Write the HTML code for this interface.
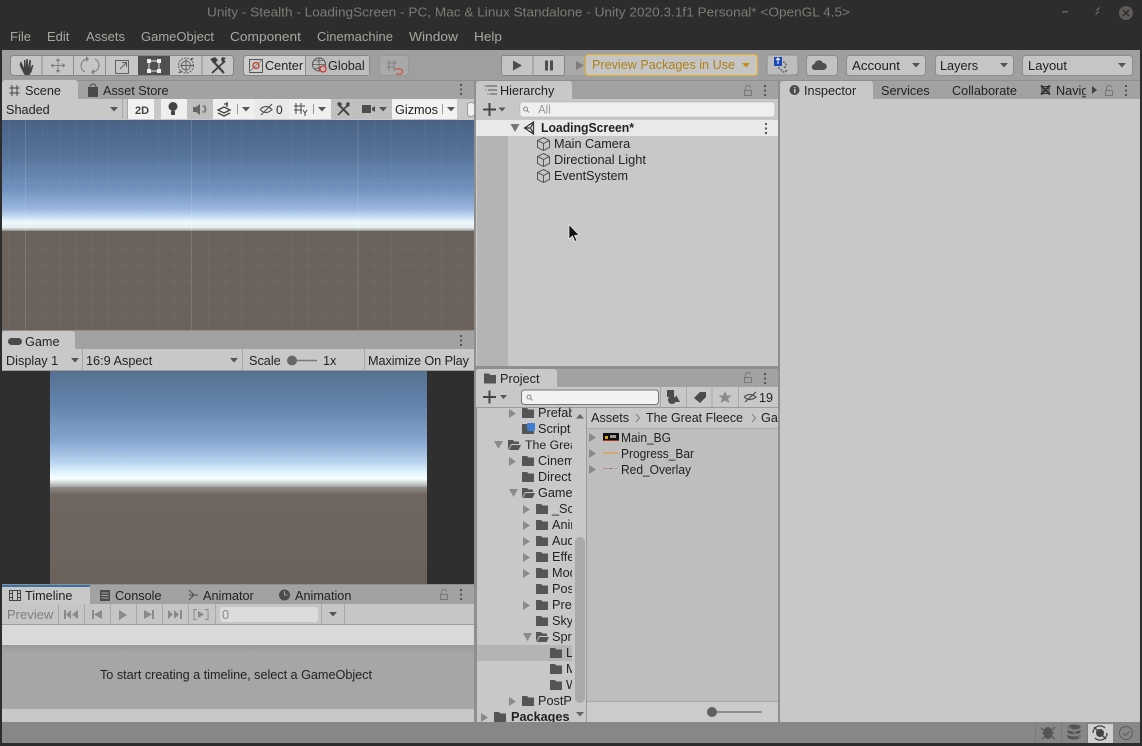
<!DOCTYPE html>
<html><head><meta charset="utf-8"><style>
html,body{margin:0;padding:0;background:#2d2d2d;width:1142px;height:746px;overflow:hidden}
svg{display:block;filter:blur(.35px)}
text{font-family:"Liberation Sans",sans-serif;font-size:12.7px;fill:#222}
.m{fill:#aaa6a0;font-size:13px}
.b{font-weight:bold}
</style></head><body>
<svg width="1142" height="746" viewBox="0 0 1142 746" xmlns="http://www.w3.org/2000/svg">
<defs>
<linearGradient id="sky1" x1="0" y1="0" x2="0" y2="1">
<stop offset="0" stop-color="#4a6286"/><stop offset=".3" stop-color="#557298"/><stop offset=".62" stop-color="#7192bc"/><stop offset=".8" stop-color="#9ab6de"/><stop offset=".87" stop-color="#c4dcf2"/><stop offset=".92" stop-color="#eef9fd"/><stop offset=".97" stop-color="#e4eeee"/><stop offset="1" stop-color="#8e9090"/>
</linearGradient>
<linearGradient id="sky2" x1="0" y1="0" x2="0" y2="1">
<stop offset="0" stop-color="#56708f"/><stop offset=".3" stop-color="#6484ad"/><stop offset=".6" stop-color="#85a5cf"/><stop offset=".78" stop-color="#b7d2ee"/><stop offset=".87" stop-color="#e0f2fc"/><stop offset=".93" stop-color="#f6fefe"/><stop offset="1" stop-color="#a3a5a3"/>
</linearGradient>
<linearGradient id="gr2" x1="0" y1="0" x2="0" y2="1"><stop offset="0" stop-color="#8f8d88"/><stop offset=".08" stop-color="#6f6660"/><stop offset="1" stop-color="#6b625c"/></linearGradient>
<linearGradient id="sh" x1="0" y1="0" x2="0" y2="1"><stop offset="0" stop-color="#989898"/><stop offset="1" stop-color="#a6a6a6"/></linearGradient>
<g id="fc"><path d="M0 0h5l1.500 1.500H12V10H0z" fill="#555"/></g>
<g id="fo"><path d="M0 10V0h5l1.500 1.500H11V4H3L0 10zM3.500 5H13l-2.500 5H1z" fill="#555"/></g>
<g id="cube" fill="none" stroke="#555" stroke-width="1"><path d="M6.500 .5l6 3v7l-6 3-6-3v-7zM.5 3.500l6 3 6-3M6.500 6.500v7"/></g>
<g id="tr"><path d="M0 0l7 4.500-7 4.500z" fill="#8a8a8a"/></g>
<g id="td"><path d="M0 0h9l-4.500 8z" fill="#8a8a8a"/></g>
<g id="dd"><path d="M0 0h8l-4 4.500z" fill="#555"/></g>
<g id="dots" fill="#555"><rect x="0" y="0" width="2" height="2"/><rect x="0" y="4.500" width="2" height="2"/><rect x="0" y="9" width="2" height="2"/></g>
<g id="lock" fill="none" stroke="#777" stroke-width="1"><path d="M1.500 5.500h7v5h-7zM2.500 5.500V2.500a2.500 2 0 0 1 5 0"/></g>
</defs>

<!-- window chrome -->
<rect width="1142" height="746" fill="#2d2d2d"/>
<text x="207" y="16.500" style="font-size:13px;fill:#7d7974" textLength="643" lengthAdjust="spacingAndGlyphs">Unity - Stealth - LoadingScreen - PC, Mac &amp; Linux Standalone - Unity 2020.3.1f1 Personal* &lt;OpenGL 4.5&gt;</text>
<rect x="1062" y="11" width="6" height="1.500" fill="#66625e"/>
<path d="M1096 10l3-3 1 1-3 3zM1095 14l3-3 1 1-3 3z" fill="#66625e"/>
<circle cx="1126" cy="13" r="7" fill="#5e5b58"/><path d="M1123 10l6 6M1129 10l-6 6" stroke="#2d2d2d" stroke-width="1.500"/>
<text class="m" x="10" y="41">File</text><text class="m" x="47" y="41">Edit</text><text class="m" x="86" y="41">Assets</text><text class="m" x="141" y="41" textLength="73" lengthAdjust="spacingAndGlyphs">GameObject</text><text class="m" x="230" y="41" textLength="71" lengthAdjust="spacingAndGlyphs">Component</text><text class="m" x="317" y="41" textLength="76" lengthAdjust="spacingAndGlyphs">Cinemachine</text><text class="m" x="409" y="41" textLength="49" lengthAdjust="spacingAndGlyphs">Window</text><text class="m" x="474" y="41" textLength="28" lengthAdjust="spacingAndGlyphs">Help</text>

<!-- toolbar -->
<rect x="2" y="50" width="1138" height="30" fill="#9f9f9f"/>
<rect x="10.500" y="55.500" width="223" height="20" rx="3" fill="#c6c6c6" stroke="#858585"/>
<rect x="138" y="56" width="32" height="19" fill="#505050"/>
<path d="M42 56v19M73.500 56v19M105.500 56v19M202 56v19" stroke="#8c8c8c"/>
<!-- hand -->
<path d="M21 61l3 7v-8h1.500v7l1-8h1.500v8l1.500-7h1.500l-.5 8 1.500-3h1.500l-2 7-2 3h-5l-3-6-2-4z" fill="#444"/>
<!-- move -->
<g stroke="#808080" fill="none"><path d="M58 60v11M52 65.500h12"/></g><path d="M58 58l2.500 3h-5zM58 73l2.500-3h-5zM50.500 65.500l3-2.500v5zM65.500 65.500l-3-2.500v5z" fill="#808080"/>
<!-- rotate -->
<path d="M85 72a7 7 0 0 1 1-13M95 59a7 7 0 0 1-1 13" fill="none" stroke="#808080" stroke-width="1.200"/><path d="M86 56l3 3-3 3zM94 75l-3-3 3-3z" fill="#808080"/>
<!-- scale -->
<rect x="115.500" y="60.500" width="13" height="13" fill="none" stroke="#606060"/><path d="M120 69l6-6M122 62.500h4.500V67" fill="none" stroke="#606060"/>
<!-- rect -->
<g fill="#f0f0f0"><rect x="147" y="59" width="4" height="4"/><rect x="157" y="59" width="4" height="4"/><rect x="147" y="69" width="4" height="4"/><rect x="157" y="69" width="4" height="4"/></g><rect x="149" y="61" width="10" height="10" fill="none" stroke="#e8e8e8"/>
<!-- transform -->
<circle cx="186" cy="65.500" r="7.500" fill="none" stroke="#606060" stroke-dasharray="2 1"/><circle cx="186" cy="65.500" r="4.500" fill="none" stroke="#606060"/><path d="M186 59v13M180 65.500h13" stroke="#606060"/><path d="M178 73l3-3v3zM194 58l-3 3v-3z" fill="#606060"/>
<!-- tools -->
<path d="M212 60l12 13" stroke="#3f3f3f" stroke-width="2.200" fill="none"/><path d="M225 61l-13 12" stroke="#3f3f3f" stroke-width="1.800" fill="none"/><path d="M210 59l5-2 3 3-3 3zM222 57l4 1-2 2 2 2-3 1-2-3z" fill="#3f3f3f"/>

<rect x="243.500" y="55.500" width="126" height="20" rx="3" fill="#cdcdcd" stroke="#858585"/>
<rect x="306" y="56" width="63" height="19" fill="#bdbdbd"/><path d="M305.500 56v19" stroke="#8c8c8c"/>
<rect x="249.500" y="59.500" width="13" height="13" fill="none" stroke="#555"/><path d="M249 72l14-13" stroke="#888"/><circle cx="256" cy="65.500" r="3" fill="none" stroke="#c83a2e" stroke-width="1.300"/>
<text x="265" y="70">Center</text>
<circle cx="319" cy="64.500" r="6.500" fill="none" stroke="#555"/><path d="M313 64.500h13M319 58v13M315 60.500a10 5 0 0 0 8 0M315 68.500a10 5 0 0 1 8 0" fill="none" stroke="#555" stroke-width=".8"/><circle cx="323" cy="69" r="3" fill="#bdbdbd" stroke="#d0362c" stroke-width="1.300"/>
<text x="328" y="70">Global</text>
<rect x="379.500" y="55.500" width="29" height="20" rx="3" fill="#a9a9a9" stroke="#979797"/>
<path d="M389 60v11M394 60v11M387 63h10M387 67h8" stroke="#808080"/><path d="M395 69h5v-0a2.500 2.500 0 0 1 0 5h-4" fill="none" stroke="#c8564b" stroke-width="1.300"/>

<!-- play -->
<rect x="501.500" y="55.500" width="63" height="20" rx="2" fill="#c4c4c4" stroke="#858585"/><path d="M533 56v19" stroke="#8c8c8c"/>
<path d="M513 60.500l9 5-9 5z" fill="#4c4c4c"/><rect x="545" y="60.500" width="3" height="10" fill="#4c4c4c"/><rect x="550" y="60.500" width="3" height="10" fill="#4c4c4c"/>
<rect x="565" y="56" width="21" height="19" fill="#a9a9a9"/><path d="M576 61l8 4.500-8 4.500z" fill="#7c7c7c"/>
<rect x="585.500" y="54.500" width="172" height="21" rx="3" fill="#c5c5c5" stroke="#e8b022"/>
<text x="592" y="69" style="font-size:12.500px;fill:#ad8119" textLength="143" lengthAdjust="spacingAndGlyphs">Preview Packages in Use</text>
<path d="M742 63h8l-4 4.500z" fill="#c28f14"/>
<rect x="767" y="55" width="31" height="20" rx="3" fill="#bdbdbd" stroke="#8e8e8e"/>
<rect x="774" y="57" width="8" height="9" fill="#1c48b8"/><path d="M778 58v6M776 60l2-2 2 2" stroke="#fff" fill="none"/>
<path d="M783 62a3 3 0 0 1 0 6M781 69a3 3 0 0 0 6 0M778 68h2" stroke="#555" stroke-width="1.300" fill="none" stroke-dasharray="2 1"/>
<rect x="806.500" y="55.500" width="31" height="20" rx="3" fill="#c2c2c2" stroke="#8e8e8e"/>
<path d="M815 70a3 3 0 0 1-.5-6 4.500 4.500 0 0 1 8.500-1 3.500 3.500 0 0 1 .5 7z" fill="#4f4f4f"/>
<rect x="846.500" y="55.500" width="79" height="20" rx="3" fill="#c5c5c5" stroke="#8e8e8e"/><text x="852" y="70" textLength="48" lengthAdjust="spacingAndGlyphs">Account</text><use href="#dd" x="912" y="63"/>
<rect x="935.500" y="55.500" width="78" height="20" rx="3" fill="#c5c5c5" stroke="#8e8e8e"/><text x="940" y="70">Layers</text><use href="#dd" x="1000" y="63"/>
<rect x="1022.500" y="55.500" width="110" height="20" rx="3" fill="#c5c5c5" stroke="#8e8e8e"/><text x="1028" y="70" textLength="39" lengthAdjust="spacingAndGlyphs">Layout</text><use href="#dd" x="1118" y="63"/>

<!-- separators / panel bg -->
<rect x="2" y="80" width="1138" height="642" fill="#8f8f8f"/>

<!-- SCENE -->
<rect x="2" y="81" width="472" height="18" fill="#a2a2a2"/>
<path d="M2 83a3 3 0 0 1 3-3h70a3 3 0 0 1 3 3v16H2z" fill="#c8c8c8"/>
<path d="M12 85v11M17 85v11M9.500 88h10M9.500 93h10" stroke="#444" stroke-width="1"/>
<text x="25" y="95">Scene</text>
<path d="M88 87h10v9a1 1 0 0 1-1 1h-8a1 1 0 0 1-1-1z" fill="#4a4a4a"/><path d="M90 87a3 3 0 0 1 6 0" fill="none" stroke="#4a4a4a"/>
<text x="103" y="95">Asset Store</text>
<use href="#dots" x="460" y="84"/>
<rect x="2" y="99" width="472" height="21" fill="#c8c8c8"/>
<text x="6" y="114">Shaded</text><use href="#dd" x="110" y="107"/>
<path d="M122.500 99v20M127.500 99v20" stroke="#a8a8a8"/>
<rect x="128" y="99" width="26" height="20" fill="#f2f2f2"/><text x="135" y="114" style="font-size:11px;fill:#444;font-weight:bold">2D</text>
<rect x="161" y="99" width="26" height="20" fill="#efefef"/><circle cx="173" cy="106.500" r="4.500" fill="#444"/><rect x="171" y="111" width="4" height="4" fill="#444"/>
<rect x="187" y="99" width="26" height="20" fill="#c0c0c0"/><path d="M193 107h3l4-3v11l-4-3h-3z" fill="#666"/><path d="M202 106a3 3 0 0 1 0 6M204 105a5 5 0 0 1 0 8" stroke="#777" fill="none"/>
<rect x="213" y="99" width="42" height="20" fill="#efefef"/>
<path d="M218 110l6-3 6 3-6 3zM218 113l6 3 6-3M224 104h4M227 102v5" fill="none" stroke="#444" stroke-width="1.300"/><path d="M237.500 104v10" stroke="#999"/><use href="#dd" x="242" y="107"/>
<rect x="255" y="99" width="34" height="20" fill="#e8e8e8"/>
<path d="M260 109.500q6-6 12 0q-6 6-12 0M261 115l11-11" fill="none" stroke="#555" stroke-width="1.200"/><text x="276" y="114" style="font-size:12px">0</text>
<rect x="289" y="99" width="42" height="20" fill="#efefef"/>
<path d="M296 103v11M301 103v11M294 106h11M294 110h8" stroke="#444"/><path d="M303 110l2 3 2-3M305 113v3" stroke="#444" fill="none"/><path d="M313.500 104v10" stroke="#999"/><use href="#dd" x="318" y="107"/>
<rect x="331" y="99" width="26" height="20" fill="#c0c0c0"/>
<path d="M338 104l11 11" stroke="#444" stroke-width="2"/><path d="M349 104l-11 11" stroke="#444" stroke-width="1.600"/><path d="M337 103l3-1 2 2-2 3zM347 102l3 1-1 2 1 1-3 1-1-2z" fill="#444"/>
<rect x="357" y="99" width="35" height="20" fill="#c0c0c0"/><rect x="362" y="105" width="9" height="8" fill="#4d4d4d"/><path d="M372 108l3-2v6l-3-2z" fill="#4d4d4d"/><use href="#dd" x="379" y="107"/>
<rect x="392" y="99" width="65" height="20" fill="#f2f2f2"/><text x="395" y="114">Gizmos</text><path d="M442.500 104v10" stroke="#999"/><use href="#dd" x="447" y="107"/>
<rect x="457" y="99" width="17" height="20" fill="#c8c8c8"/>
<rect x="467.500" y="102.500" width="7" height="14" rx="3" fill="#f0f0f0" stroke="#999"/>

<rect x="2" y="120" width="472" height="111" fill="url(#sky1)"/>
<rect x="2" y="231" width="472" height="99" fill="#6b625c"/>
<g stroke="#ffffff" stroke-opacity=".035"><path d="M8.500 120v210M42.500 120v210M59.500 120v210M75.500 120v210M92 120v210M108.500 120v210M125.500 120v210M141.500 120v210M158.500 120v210M175 120v210M208.500 120v210M225 120v210M241.500 120v210M258 120v210M275 120v210M291.500 120v210M308 120v210M325 120v210M341.500 120v210M375 120v210M391.500 120v210M408 120v210M425 120v210M441.500 120v210M458 120v210"/><path d="M2 133.500h472M2 150h472M2 167h472M2 183.500h472M2 200h472M2 249h472M2 265h472M2 281.500h472M2 298h472M2 315h472"/></g>
<g stroke="#ffffff" stroke-opacity=".13"><path d="M25.500 120v210M191.500 120v210M358 120v210"/></g>

<!-- GAME -->
<rect x="2" y="331" width="472" height="18" fill="#a2a2a2"/>
<path d="M2 334a3 3 0 0 1 3-3h67a3 3 0 0 1 3 3v15H2z" fill="#c8c8c8"/>
<rect x="8" y="338" width="14" height="7" rx="3.500" fill="#4a4a4a"/>
<text x="25" y="346">Game</text><use href="#dots" x="460" y="335"/>
<rect x="2" y="349" width="472" height="21" fill="#c8c8c8"/>
<text x="6" y="365">Display 1</text><use href="#dd" x="71" y="358"/>
<path d="M82.500 349v21M242.500 349v21M364.500 349v21" stroke="#a8a8a8"/>
<text x="86" y="365">16:9 Aspect</text><use href="#dd" x="230" y="358"/>
<text x="249" y="365">Scale</text><path d="M292 360.500h25" stroke="#777" stroke-width="1.500"/><circle cx="292" cy="360.500" r="5" fill="#666"/><text x="323" y="365">1x</text>
<text x="368" y="365" textLength="101" lengthAdjust="spacing">Maximize On Play</text>
<rect x="2" y="370" width="472" height="1" fill="#9b9b9b"/>
<rect x="2" y="371" width="48" height="213" fill="#2f2f2f"/><rect x="427" y="371" width="47" height="213" fill="#2f2f2f"/>
<rect x="50" y="371" width="377" height="116" fill="url(#sky2)"/>
<rect x="50" y="487" width="377" height="97" fill="url(#gr2)"/>

<!-- TIMELINE -->
<rect x="2" y="585" width="472" height="19" fill="#a2a2a2"/>
<rect x="2" y="585" width="88" height="19" fill="#c8c8c8"/><rect x="2" y="585" width="88" height="2" fill="#3a72b0"/>
<path d="M9.500 590.500h11v10h-11zM12.500 590.500v10M17.500 590.500v10M9.500 593.500h3M9.500 597.500h3M17.500 593.500h3M17.500 597.500h3" fill="none" stroke="#444"/>
<text x="25" y="600">Timeline</text>
<rect x="100" y="590" width="10" height="11" fill="#4c4c4c"/><path d="M101.500 593h7M101.500 595.500h7M101.500 598h7" stroke="#a2a2a2"/>
<text x="115" y="600">Console</text>
<path d="M189 590l5 5-5 5M189 595h9" fill="none" stroke="#4c4c4c"/>
<text x="203" y="600">Animator</text>
<circle cx="284.500" cy="595" r="5.500" fill="#4c4c4c"/><path d="M284.500 591v4h3" stroke="#a2a2a2" fill="none"/>
<text x="295" y="600">Animation</text>
<use href="#lock" x="439" y="589"/><use href="#dots" x="460" y="589"/>
<rect x="2" y="604" width="472" height="21" fill="#c6c6c6"/>
<rect x="2" y="624" width="472" height="1" fill="#9b9b9b"/>
<text x="7" y="619" style="fill:#7f7f7f;font-size:13px">Preview</text>
<path d="M58.500 604v20M84.500 604v20M110.500 604v20M136.500 604v20M162.500 604v20M188.500 604v20M215.500 604v20M321.500 604v20M344.500 604v20" stroke="#a8a8a8"/>
<g fill="#8a8a8a"><path d="M64 610h2v9h-2zM71 610v9l-5-4.500zM78 610v9l-6-4.500z"/><path d="M92 610h2v9h-2zM102 610v9l-8-4.500z"/><path d="M119 610l8 5-8 5z"/><path d="M144 610l8 4.500-8 4.500zM152 610h2v9h-2z"/><path d="M168 610l5 4.500-5 4.500zM174 610l5 4.500-5 4.500zM180 610h2v9h-2z"/><path d="M198 611l6 3.500-6 3.500z"/></g>
<path d="M197 609.500h-3v10h3M205 609.500h3v10h-3" fill="none" stroke="#8a8a8a"/>
<rect x="220" y="607" width="98" height="15" rx="3" fill="#dcdcdc"/><text x="222" y="619" style="fill:#8a8a8a">0</text>
<use href="#dd" x="329" y="612"/>
<rect x="2" y="625" width="472" height="20" fill="#d9d9d9"/>
<rect x="2" y="645" width="472" height="8" fill="url(#sh)"/>
<rect x="2" y="653" width="472" height="56" fill="#a6a6a6"/>
<text x="100" y="679" textLength="272" lengthAdjust="spacing">To start creating a timeline, select a GameObject</text>
<rect x="2" y="709" width="472" height="13" fill="#c8c8c8"/>

<!-- HIERARCHY -->
<rect x="476" y="81" width="302" height="18" fill="#a2a2a2"/>
<path d="M476 84a3 3 0 0 1 3-3h90a3 3 0 0 1 3 3v15h-96z" fill="#c8c8c8"/>
<path d="M486 86h11M488 90h9M490 94h7" stroke="#555"/><path d="M484.500 86h1M485.500 90h1M487.500 94h1" stroke="#555"/>
<text x="500" y="95">Hierarchy</text>
<use href="#lock" x="743" y="85"/><use href="#dots" x="764" y="85"/>
<rect x="476" y="99" width="302" height="21" fill="#c8c8c8"/>
<path d="M483 109.500h13M489.500 103v13" stroke="#444" stroke-width="2"/><path d="M498.500 107.500h7l-3.500 4z" fill="#555"/>
<rect x="520" y="102" width="255" height="15" rx="3" fill="#efefef" stroke="#aaa" stroke-width=".5"/>
<circle cx="525.500" cy="109" r="2" fill="none" stroke="#888"/><path d="M527 110.500l2 2" stroke="#888"/>
<text x="538" y="113.500" style="fill:#999;font-size:11.500px">All</text>
<rect x="476" y="120" width="302" height="246" fill="#c8c8c8"/>
<rect x="477" y="136" width="31" height="230" fill="#b4b4b4"/>
<rect x="476" y="120" width="302" height="16" fill="#e9e9e9"/>
<path d="M510.500 124h9l-4.500 8z" fill="#777"/>
<path d="M524.500 128l9-6v12zM524.500 128h6l3-6M530.500 128l3 6" fill="none" stroke="#333" stroke-width="1.200"/>
<text x="541" y="132" class="b" textLength="93" lengthAdjust="spacingAndGlyphs">LoadingScreen*</text>
<use href="#dots" x="765" y="123"/>
<use href="#cube" x="537" y="137"/><text x="554" y="148">Main Camera</text>
<use href="#cube" x="537" y="153"/><text x="554" y="164" textLength="92" lengthAdjust="spacingAndGlyphs">Directional Light</text>
<use href="#cube" x="537" y="169"/><text x="554" y="180" textLength="74" lengthAdjust="spacingAndGlyphs">EventSystem</text>
<!-- cursor -->
<path d="M569 224.500v14.500l3.500-3 2.500 5.500 2-1-2.500-5 4.500-.5z" fill="#111" stroke="#eee" stroke-width=".7"/>

<!-- INSPECTOR -->
<rect x="780" y="81" width="360" height="18" fill="#a2a2a2"/>
<path d="M780 84a3 3 0 0 1 3-3h87a3 3 0 0 1 3 3v15h-93z" fill="#c8c8c8"/>
<circle cx="794.500" cy="90" r="5" fill="#4a4a4a"/><rect x="794" y="89" width="1.500" height="4" fill="#c8c8c8"/><rect x="794" y="87" width="1.500" height="1.200" fill="#c8c8c8"/>
<text x="804" y="95">Inspector</text><text x="881" y="95">Services</text><text x="952" y="95">Collaborate</text>
<path d="M1041 85.500l9 9M1050 85.500l-9 9" stroke="#333" stroke-width="2"/><rect x="1042" y="86.500" width="7" height="7" fill="none" stroke="#333"/>
<text x="1056" y="95">Navig</text>
<rect x="1086" y="81" width="54" height="18" fill="#a2a2a2"/>
<path d="M1092 86l5 4-5 4z" fill="#444"/><use href="#lock" x="1104" y="85"/><use href="#dots" x="1125" y="85"/>
<rect x="780" y="99" width="360" height="623" fill="#c8c8c8"/>

<!-- PROJECT -->
<rect x="476" y="369" width="302" height="18" fill="#a2a2a2"/>
<path d="M476 372a3 3 0 0 1 3-3h75a3 3 0 0 1 3 3v15h-81z" fill="#c8c8c8"/>
<use href="#fc" x="484" y="373.500"/>
<text x="500" y="383">Project</text><use href="#lock" x="743" y="372"/><use href="#dots" x="764" y="373"/>
<rect x="476" y="387" width="302" height="20" fill="#c8c8c8"/>
<path d="M483 397h13M489.500 390.500v13" stroke="#444" stroke-width="2"/><path d="M500 395h7l-3.500 4z" fill="#555"/>
<rect x="521.500" y="390" width="137" height="14.500" rx="3" fill="#f2f2f2" stroke="#777"/>
<circle cx="529" cy="397" r="2" fill="none" stroke="#888"/><path d="M530.500 398.500l2 2" stroke="#888"/>
<path d="M660.500 387v20M686.500 387v20M712 387v20M738.500 387v20" stroke="#a8a8a8"/>
<rect x="667" y="390" width="7" height="7" fill="#4c4c4c"/><circle cx="672" cy="400" r="4" fill="#4c4c4c"/><path d="M676 395l4 7h-6z" fill="#4c4c4c"/>
<path d="M694 398l6-6h6v5l-6 6z" fill="#4c4c4c"/>
<path d="M725 391l2 4.500h4.500l-3.500 3 1.500 4.500-4.500-2.500-4.500 2.500 1.500-4.500-3.500-3H723z" fill="#8a8a8a"/>
<path d="M744 397q6-5 12 0q-6 5-12 0M745 402l11-10" fill="none" stroke="#555" stroke-width="1.200"/>
<text x="759" y="402" style="font-size:12.500px">19</text>
<rect x="476" y="407" width="302" height="1" fill="#9b9b9b"/>

<rect x="477" y="408" width="96" height="314" fill="#c8c8c8"/>
<rect x="477" y="645" width="96" height="16" fill="#b4b4b4"/>
<use href="#tr" x="509" y="409"/><use href="#fc" x="522" y="408"/><text x="538" y="417">Prefab</text>
<use href="#fc" x="522" y="424"/><rect x="527" y="423" width="8" height="8" rx="1" fill="#3c7fd0"/><text x="538" y="433">Script</text>
<use href="#td" x="494" y="441"/><use href="#fo" x="508" y="440"/><text x="525" y="449" style="font-size:12.300px">The Great</text>
<use href="#tr" x="509" y="457"/><use href="#fc" x="522" y="456"/><text x="538" y="465">Cinem</text>
<use href="#fc" x="522" y="472"/><text x="538" y="481">Direct</text>
<use href="#td" x="509" y="489"/><use href="#fo" x="522" y="488"/><text x="538" y="497">Game</text>
<use href="#tr" x="523" y="505"/><use href="#fc" x="536" y="504"/><text x="552" y="513">_Sc</text>
<use href="#tr" x="523" y="521"/><use href="#fc" x="536" y="520"/><text x="552" y="529">Anim</text>
<use href="#tr" x="523" y="537"/><use href="#fc" x="536" y="536"/><text x="552" y="545">Aud</text>
<use href="#tr" x="523" y="553"/><use href="#fc" x="536" y="552"/><text x="552" y="561">Effe</text>
<use href="#tr" x="523" y="569"/><use href="#fc" x="536" y="568"/><text x="552" y="577">Mod</text>
<use href="#fc" x="536" y="584"/><text x="552" y="593">Pos</text>
<use href="#tr" x="523" y="601"/><use href="#fc" x="536" y="600"/><text x="552" y="609">Pre</text>
<use href="#fc" x="536" y="616"/><text x="552" y="625">Sky</text>
<use href="#td" x="523" y="633"/><use href="#fo" x="536" y="632"/><text x="552" y="641">Spr</text>
<use href="#fc" x="550" y="648"/><text x="566" y="657">L</text>
<use href="#fc" x="550" y="664"/><text x="566" y="673">M</text>
<use href="#fc" x="550" y="680"/><text x="566" y="689">W</text>
<use href="#tr" x="509" y="697"/><use href="#fc" x="522" y="696"/><text x="538" y="705">PostP</text>
<use href="#tr" x="481" y="713"/><use href="#fc" x="494" y="712"/><text x="511" y="721" class="b">Packages</text>

<!-- clip + scrollbar -->
<rect x="572" y="408" width="14" height="314" fill="#c8c8c8"/>
<rect x="575" y="537" width="10" height="166" rx="5" fill="#a9a9a9"/>
<path d="M576 418.500l4-4.500 4 4.500z" fill="#666"/><path d="M576 712h8l-4 4.500z" fill="#666"/>
<rect x="586" y="408" width="1" height="314" fill="#9b9b9b"/>
<rect x="587" y="408" width="191" height="293" fill="#bebebe"/>
<rect x="587" y="408" width="191" height="20" fill="#c8c8c8"/>
<rect x="587" y="428" width="191" height="1" fill="#aaa"/>
<text x="591" y="422">Assets</text><path d="M636 414l3.500 4-3.500 4" fill="none" stroke="#888" stroke-width="1.200"/>
<text x="646" y="422" textLength="97" lengthAdjust="spacingAndGlyphs">The Great Fleece</text><path d="M752 414l3.500 4-3.500 4" fill="none" stroke="#888" stroke-width="1.200"/>
<text x="761" y="422">Ga</text>
<use href="#tr" x="589" y="433"/><rect x="603" y="433" width="16" height="8" fill="#111"/><rect x="605" y="436" width="3" height="3" fill="#e8a020"/><rect x="610" y="435" width="6" height="3" fill="#999"/><rect x="603" y="440" width="16" height="1" fill="#b03020"/>
<text x="621" y="442" textLength="50" lengthAdjust="spacingAndGlyphs">Main_BG</text>
<use href="#tr" x="589" y="449"/><rect x="603" y="452.500" width="16" height="1" fill="#e09a20"/><text x="621" y="458" textLength="73" lengthAdjust="spacingAndGlyphs">Progress_Bar</text>
<use href="#tr" x="589" y="465"/><path d="M603 468.500h5" stroke="#b89080"/><path d="M609 468.500h3" stroke="#907070"/><path d="M613 468.500h5" stroke="#aeaeae"/><text x="621" y="474" textLength="70" lengthAdjust="spacingAndGlyphs">Red_Overlay</text>
<rect x="587" y="701" width="191" height="21" fill="#cbcbcb"/>
<rect x="587" y="701" width="191" height="1" fill="#a8a8a8"/>
<path d="M712 712h50" stroke="#777" stroke-width="1.500"/><circle cx="712" cy="712" r="5" fill="#5f5f5f"/>

<!-- STATUS -->
<rect x="2" y="722" width="1138" height="21" fill="#878787"/>
<path d="M1035.500 723v19M1061.500 723v19M1087.500 723v19" stroke="#7a7a7a"/>
<ellipse cx="1048" cy="733" rx="4.500" ry="6" fill="#555"/><path d="M1041 728l14 11M1042 733h12M1042 739l3-3M1055 727l-3 3" stroke="#555" stroke-width="1.200"/>
<ellipse cx="1074" cy="727" rx="6.500" ry="2.500" fill="#555"/><path d="M1067.500 730q6.500 3 13 0v3q-6.500 3-13 0zM1067.500 735q6.500 3 13 0v3q-6.500 3-13 0z" fill="#555"/><path d="M1067 725l14 14" stroke="#878787"/>
<rect x="1088" y="724" width="25" height="19" fill="#cfcfcf"/>
<circle cx="1100" cy="733" r="4" fill="#444"/><path d="M1093 733a7 7 0 0 1 12-5M1107 733a7 7 0 0 1-12 5M1094 727l12 12" fill="none" stroke="#444" stroke-width="1.300"/>
<circle cx="1126" cy="733" r="6.500" fill="none" stroke="#5d5d5d"/><path d="M1123 733l2.500 2.500 4-4" fill="none" stroke="#5d5d5d"/>
</svg>
</body></html>
